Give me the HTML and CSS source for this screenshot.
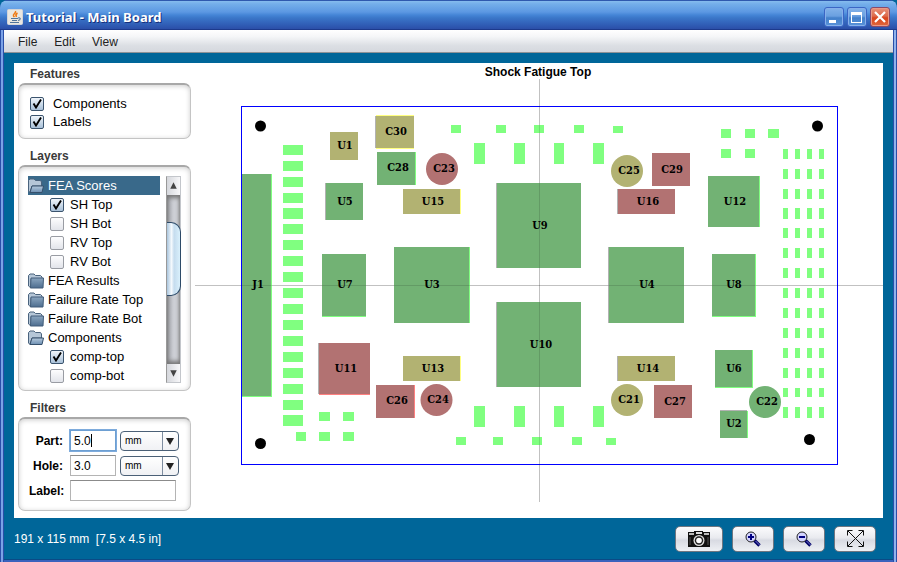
FILE: index.html
```html
<!DOCTYPE html>
<html lang="en">
<head>
<meta charset="utf-8">
<title>Tutorial - Main Board</title>
<link rel="stylesheet" href="styles.css">
</head>
<body>
<div class="window">
  <header class="titlebar">
    <svg class="app-icon" viewBox="0 0 16 16" aria-hidden="true">
      <rect x="0.500" y="0.500" width="15" height="15" rx="1" fill="#e9e7e1" stroke="#d2d4d8"/>
      <path d="M8.500 2c1 2-3 3-2 5l1 1M10.500 4c-2 1-2 2-1 4" fill="none" stroke="#ef7a12" stroke-width="1.500"/>
      <path d="M4 9.500h7M5 11.500h5M3 13.500h9M11 9c3-1 3 2 0 2.500" fill="none" stroke="#50749a" stroke-width="1.100"/>
    </svg>
    <h1 class="title">Tutorial - Main Board</h1>
    <div class="window-buttons">
      <button class="win-btn" aria-label="Minimize"><svg viewBox="0 0 20 20"><path d="M5 13h7v3H5z" fill="#fff"/></svg></button>
      <button class="win-btn" aria-label="Maximize"><svg viewBox="0 0 20 20"><path d="M4 5h11v11H4zM5 8v7h9V8z" fill="#fff" fill-rule="evenodd"/></svg></button>
      <button class="win-btn win-close" aria-label="Close"><svg viewBox="0 0 20 20"><path d="M5 5l10 10M15 5L5 15" stroke="#fff" stroke-width="2.200"/></svg></button>
    </div>
  </header>
  <div class="client">
    <nav class="menubar">
      <button class="menu">File</button>
      <button class="menu">Edit</button>
      <button class="menu">View</button>
    </nav>
    <main class="workspace">
      <aside class="sidebar">
        <section>
          <h2 class="heading">Features</h2>
          <div class="panel features">
            <label class="check"><input type="checkbox" checked>Components</label>
            <label class="check"><input type="checkbox" checked>Labels</label>
          </div>
        </section>
        <section>
          <h2 class="heading">Layers</h2>
          <div class="panel layers">
            <svg width="0" height="0" class="defs" aria-hidden="true">
              <defs>
                <linearGradient id="fold" x1="0" y1="0" x2="0" y2="1"><stop offset="0" stop-color="#8ba6c0"/><stop offset="1" stop-color="#4d6d8f"/></linearGradient>
                <linearGradient id="fold-light" x1="0" y1="0" x2="0" y2="1"><stop offset="0" stop-color="#b6cadd"/><stop offset="1" stop-color="#6d8fb2"/></linearGradient>
                <symbol id="closed" viewBox="0 0 16 16">
                  <path d="M.5 13V2.500L2 1h4l1.500 1.500h5L14 4v2H3v9z" fill="#b5c6d7" stroke="#4a637d"/>
                  <path d="M3 5h12.500l-.5 10H2.500z" fill="url(#fold)" stroke="#425d7a"/>
                </symbol>
                <symbol id="open" viewBox="0 0 16 16">
                  <path d="M.5 13V2.500L2 1h4l1.500 1.500h5L13.500 4v4H4l-2 6.500z" fill="#b5c6d7" stroke="#4a637d"/>
                  <path d="M2 14.500L4 8h11.500l-1.500 6.500z" fill="url(#fold-light)" stroke="#36506c"/>
                </symbol>
              </defs>
            </svg>
            <ul class="tree">
              <li class="node selected"><svg class="folder"><use href="#open"/></svg>FEA Scores</li>
              <li><label class="check leaf"><input type="checkbox" checked>SH Top</label></li>
              <li><label class="check leaf"><input type="checkbox">SH Bot</label></li>
              <li><label class="check leaf"><input type="checkbox">RV Top</label></li>
              <li><label class="check leaf"><input type="checkbox">RV Bot</label></li>
              <li class="node"><svg class="folder"><use href="#closed"/></svg>FEA Results</li>
              <li class="node"><svg class="folder"><use href="#closed"/></svg>Failure Rate Top</li>
              <li class="node"><svg class="folder"><use href="#closed"/></svg>Failure Rate Bot</li>
              <li class="node"><svg class="folder"><use href="#open"/></svg>Components</li>
              <li><label class="check leaf"><input type="checkbox" checked>comp-top</label></li>
              <li><label class="check leaf"><input type="checkbox">comp-bot</label></li>
            </ul>
            <div class="scrollbar">
              <button class="scroll-btn" aria-label="Scroll up"><svg viewBox="0 0 14 18"><path d="M7 5l3.500 7h-7z" fill="#444"/></svg></button>
              <div class="track"><div class="thumb"></div></div>
              <button class="scroll-btn" aria-label="Scroll down"><svg viewBox="0 0 14 18"><path d="M7 13l3.500-7h-7z" fill="#444"/></svg></button>
            </div>
          </div>
        </section>
        <section>
          <h2 class="heading">Filters</h2>
          <form class="panel filters">
            <label for="part">Part:</label>
            <input class="field active" id="part" type="text" value="5.0">
            <select class="unit" aria-label="Part unit"><option>mm</option></select>
            <label for="hole">Hole:</label>
            <input class="field" id="hole" type="text" value="3.0">
            <select class="unit" aria-label="Hole unit"><option>mm</option></select>
            <label for="name">Label:</label>
            <input class="field wide" id="name" type="text" value="">
          </form>
        </section>
      </aside>
      <svg class="board" viewBox="195 63 688 455" role="img" aria-label="Shock Fatigue Top">
        <text class="board-title" x="538" y="76">Shock Fatigue Top</text>
        <path class="axis" d="M539.500 79V502M195 285.500H883"/>
        <rect class="outline" x="241.500" y="106.500" width="596" height="358"/>
        <g class="pads" shape-rendering="crispEdges">
          <path d="M283 145h20v10h-20zM283 161h20v10h-20zM283 177h20v10h-20zM283 193h20v10h-20zM283 208h20v11h-20zM283 224h20v10h-20zM283 240h20v10h-20zM283 256h20v10h-20zM283 272h20v10h-20zM283 288h20v10h-20zM283 304h20v10h-20zM283 320h20v10h-20zM283 336h20v10h-20zM283 352h20v10h-20zM283 368h20v10h-20zM283 384h20v10h-20zM283 400h20v10h-20zM283 415h20v11h-20z"/>
          <path d="M451 125h10v8h-10zM496 125h10v8h-10zM534 125h10v8h-10zM574 125h10v8h-10zM613 126h10v7h-10z"/>
          <path d="M474 143h11v21h-11zM514 143h11v21h-11zM554 143h10v21h-10zM593 143h11v21h-11z"/>
          <path d="M474 406h11v21h-11zM514 406h11v21h-11zM554 406h10v21h-10zM593 406h11v21h-11z"/>
          <path d="M456 437h10v8h-10zM493 437h10v8h-10zM532 437h10v8h-10zM572 437h10v8h-10zM606 438h10v7h-10z"/>
          <path d="M721 129h10v9h-10zM745 129h10v9h-10zM768 129h11v9h-11zM721 149h10v9h-10zM745 149h10v9h-10z"/>
          <path d="M319 412h11v9h-11zM343 412h11v9h-11zM296 432h10v9h-10zM319 432h11v9h-11zM343 432h11v9h-11z"/>
          <path id="pins" d="M783 149h5v10h-5zM783 169h5v10h-5zM783 189h5v10h-5zM783 208h5v11h-5zM783 228h5v10h-5zM783 248h5v10h-5zM783 268h5v10h-5zM783 288h5v10h-5zM783 308h5v10h-5zM783 328h5v10h-5zM783 348h5v10h-5zM783 368h5v10h-5zM783 388h5v9h-5zM783 407h5v11h-5z"/>
          <use href="#pins" x="12"/><use href="#pins" x="24"/><use href="#pins" x="36"/>
          <path d="M242 174h30v223h-30zM377 152h39v33h-39zM322 254h44v63h-44zM394 247h76v76h-76zM708 176h52v51h-52zM712 254h44v63h-44zM715 350h38v38h-38zM720 411h28v27h-28z"/>
        </g>
        <g shape-rendering="crispEdges">
          <path fill="#ffff80" d="M376 115h38v34h-38zM403 189h58v25h-58zM403 356h58v25h-58z"/>
          <path fill="#ff8080" d="M319 343h51v52h-51zM376 385h39v33h-39z"/>
          <path fill="#b2b2b2" d="M375 116h1v32h-1zM325 183h1v37h-1zM318 343h1v51h-1zM496 183h1v85h-1zM496 302h1v85h-1zM608 247h1v76h-1zM617 189h1v25h-1zM617 356h1v25h-1zM720 410h27v1h-27z"/>
          <path class="low" d="M242 174h29v222h-29zM377 152h38v33h-38zM326 183h37v37h-37zM322 254h44v62h-44zM394 247h75v76h-75zM497 183h84v85h-84zM497 302h84v85h-84zM609 247h75v76h-75zM708 176h51v51h-51zM712 254h43v62h-43zM715 350h37v37h-37zM720 411h27v27h-27z"/>
          <path class="mid" d="M330 132h28v28h-28zM376 116h38v32h-38zM403 189h57v25h-57zM403 356h57v25h-57zM618 356h57v25h-57z"/>
          <path class="high" d="M652 153h38v33h-38zM618 189h57v25h-57zM319 343h51v51h-51zM376 385h38v33h-38zM654 385h38v33h-38z"/>
        </g>
        <circle class="high" cx="442" cy="169" r="16"/>
        <circle class="mid" cx="627" cy="171" r="16"/>
        <circle class="high" cx="436.500" cy="400" r="16"/>
        <circle class="mid" cx="627" cy="400" r="16"/>
        <circle class="low" cx="765" cy="402" r="16"/>
        <path class="axis" d="M539.500 79V502M195 285.500H883"/>
        <g fill="#000">
          <circle cx="260.500" cy="126" r="5.500"/><circle cx="817.500" cy="126" r="5.500"/>
          <circle cx="260.500" cy="443.500" r="5.500"/><circle cx="809.500" cy="439.500" r="5.500"/>
        </g>
        <g class="refs">
          <text x="345" y="149">U1</text><text x="396" y="135">C30</text><text x="398" y="171">C28</text><text x="444" y="172">C23</text>
          <text x="345" y="205">U5</text><text x="433" y="205">U15</text><text x="540" y="229">U9</text><text x="629" y="174">C25</text>
          <text x="672" y="173">C29</text><text x="648" y="205">U16</text><text x="735" y="205">U12</text>
          <text x="258" y="288">J1</text><text x="345" y="288">U7</text><text x="432" y="288">U3</text><text x="647" y="288">U4</text><text x="734" y="288">U8</text>
          <text x="541" y="348">U10</text><text x="346" y="372">U11</text><text x="433" y="372">U13</text><text x="648" y="372">U14</text><text x="734" y="372">U6</text>
          <text x="397" y="404">C26</text><text x="438" y="403">C24</text><text x="629" y="403">C21</text><text x="675" y="405">C27</text><text x="767" y="405">C22</text><text x="734" y="427">U2</text>
        </g>
      </svg>
    </main>
    <footer class="statusbar">
      <p class="size">191 x 115 mm&nbsp; [7.5 x 4.5 in]</p>
      <div class="tools">
        <button class="tool snapshot" aria-label="Snapshot"><svg width="24" height="18" viewBox="0 0 24 18">
          <path d="M1 2h6V1h9v1h7v15H1z" fill="#111"/><path d="M2 3h5v2H2zM17 3h5v2h-5z" fill="#bbb"/><path d="M9 2h6v2H9z" fill="#ddd"/><path d="M3 7v8M21 7v8" stroke="#555"/>
          <circle cx="12" cy="10.500" r="5.500" fill="#ddd"/><circle cx="12" cy="10.500" r="4.200" fill="#222"/><circle cx="12" cy="10.500" r="2.800" fill="#fff"/></svg></button>
        <button class="tool" aria-label="Zoom in"><svg width="16" height="16" viewBox="0 0 16 16">
          <path d="M9.500 9.500l5 5" stroke="#000066" stroke-width="3.400"/><path d="M10.500 10l4 4" stroke="#7878d0"/>
          <circle cx="6" cy="6" r="5" fill="#d4d4ff" stroke="#222"/><path d="M6 3v6M3 6h6" stroke="#000080" stroke-width="2"/></svg></button>
        <button class="tool" aria-label="Zoom out"><svg width="16" height="16" viewBox="0 0 16 16">
          <path d="M9.500 9.500l5 5" stroke="#000066" stroke-width="3.400"/><path d="M10.500 10l4 4" stroke="#7878d0"/>
          <circle cx="6" cy="6" r="5" fill="#d4d4ff" stroke="#222"/><path d="M3 6h6" stroke="#000080" stroke-width="2"/></svg></button>
        <button class="tool" aria-label="Fit to window"><svg width="17" height="17" viewBox="0 0 17 17">
          <path d="M1 1l15 15M16 1L1 16M.5 5.500v-5h5M11.500.5h5v5M16.500 11.500v5h-5M5.500 16.500h-5v-5" fill="none" stroke="#111"/></svg></button>
      </div>
    </footer>
  </div>
</div>
</body>
</html>
```
FILE: styles.css
```css
* { box-sizing: border-box; }

body {
  margin: 0;
  background: #006699;
  color: #000;
  font: 13px/16px "Liberation Sans", Arial, sans-serif;
}

h1, h2, p, ul { margin: 0; padding: 0; }
button, input, select { font: inherit; color: inherit; margin: 0; }

.window {
  display: flex;
  flex-direction: column;
  min-height: 100vh;
  padding: 0 4px 3px;
  border-radius: 8px 8px 0 0;
  background: linear-gradient(90deg, #2a4fa8 0 1px, #7ba2e7 1px 3px, #2a4fa8 3px 4px, #3a62bd 4px calc(100% - 4px), #2a4fa8 calc(100% - 4px) calc(100% - 3px), #8fb2ec calc(100% - 3px) calc(100% - 1px), #2a4fa8 calc(100% - 1px));
}

.titlebar {
  display: flex;
  align-items: center;
  height: 30px;
  margin: 0 -4px;
  padding: 3px 7px 0;
  border-radius: 8px 8px 0 0;
  background: linear-gradient(#2f59ae 0 1px, #86bcee 1px, #74aeea 4px, #5c98e2 12px, #4585d6 15px, #3a76c8 18px, #3160b8 24px, #2b4fa8 29px, #1d3a8c 29px);
}

.app-icon { width: 16px; height: 16px; }

.title {
  flex: 1;
  padding-left: 3px;
  color: #fff;
  font: bold 13px/18px "Noto Sans", sans-serif;
  text-shadow: 1px 1px 0 #16307c;
}

.window-buttons { display: flex; gap: 3px; }

.win-btn {
  width: 20px;
  height: 20px;
  padding: 0;
  border: 1px solid #3b66c4;
  border-radius: 3px;
  background: linear-gradient(#83b2e9, #6aa0e0 45%, #4380ca 55%, #5a93da);
  box-shadow: inset 0 0 0 1px #86b0ea;
}
.win-btn svg { display: block; width: 20px; height: 20px; margin: -1px; }
.win-close {
  border-color: #8a4a6a;
  background: linear-gradient(#e8917a, #dd6a4c 45%, #d9441c 55%, #e0683e);
  box-shadow: inset 0 0 0 1px #e89a88;
}

.client { flex: 1; display: flex; flex-direction: column; background: #006699; }

.menubar {
  display: flex;
  gap: 17px;
  height: 23px;
  padding: 0 14px;
  border-bottom: 1px solid #8d9297;
  background: linear-gradient(#fff, #f5f6f8 30%, #dcdfe4 70%, #d5d8de);
}
.menu { padding: 2px 0 0; border: 0; background: none; color: #222; font-size: 12px; }

.workspace {
  display: flex;
  flex: 1;
  margin: 10px 10px 0;
  background: #fff;
}

.sidebar {
  display: flex;
  flex-direction: column;
  gap: 6px;
  width: 181px;
  flex: none;
  padding: 0 4px 6px;
}

.heading {
  height: 20px;
  padding: 2px 12px 0;
  color: #3a3a3a;
  font: bold 12px/18px "Liberation Sans", Arial, sans-serif;
}

.panel {
  width: 173px;
  border: 1px solid #c4c4c4;
  border-top: 2px solid #a8a8a8;
  border-radius: 7px;
  background: #fff;
  box-shadow: inset 0 1px 5px #ccc;
}

.features { display: flex; flex-direction: column; padding: 10px 11px 7px; }
.features .check { height: 18px; gap: 9px; }

.check { display: flex; align-items: center; gap: 6px; height: 19px; }
.check input {
  appearance: none;
  flex: none;
  width: 14px;
  height: 14px;
  border: 1px solid #999ca3;
  border-radius: 2px;
  background: linear-gradient(#fdfdfe, #e2e4ea);
}
.check input:checked {
  border-color: #3b546e;
  background:
    url("data:image/svg+xml,%3Csvg xmlns='http://www.w3.org/2000/svg' viewBox='0 0 12 12'%3E%3Cpath d='M2.500 5.500L5 9.500L10 1.500' fill='none' stroke='%23000' stroke-width='1.900'/%3E%3C/svg%3E"),
    linear-gradient(#f0f5fa, #a8c0d8);
}

.layers { display: flex; gap: 6px; padding: 9px 9px 5px 9px; }
.defs { position: absolute; }
.tree { flex: 1; list-style: none; }
.node { display: flex; align-items: center; gap: 4px; height: 19px; }
.selected { background: #39698a; color: #fff; }
.folder { width: 16px; height: 16px; }
.leaf { padding-left: 22px; }

.scrollbar {
  display: flex;
  flex-direction: column;
  width: 15px;
  height: 207px;
  border: 1px solid #c3c6cb;
  border-left-color: #999;
}
.scroll-btn { height: 18px; padding: 0; border: 0; background: linear-gradient(90deg, #d5d7dc, #f7f7f9); }
.scroll-btn svg { display: block; width: 13px; height: 18px; }
.track {
  flex: 1;
  padding-top: 27px;
  background: linear-gradient(90deg, #aaacb2, #cbcdd3 50%, #d8dae0);
  box-shadow: inset 0 3px 4px #777, inset 0 -3px 4px #777;
}
.thumb {
  height: 74px;
  margin-right: -1px;
  border: 1px solid #2d4a68;
  border-left: 0;
  border-radius: 0 10px 10px 0;
  background: linear-gradient(90deg, #a9c5dd, #f4f9fd 35%, #c5dcee 55%, #d9f0fc);
}

.filters {
  display: grid;
  grid-template-columns: 34px 48px 59px;
  gap: 2px 6px;
  align-items: center;
  padding: 10px 0 8px 10px;
}
.filters label { font-size: 12px; font-weight: bold; text-align: right; }
.filters .unit { margin-left: -3px; }
.field {
  width: 46px;
  height: 21px;
  margin: 1px;
  padding: 0 3px;
  border: 1px solid #b4b4b4;
  border-top-color: #8b8b8b;
  background: #fff;
  font-size: 12px;
  outline: 0;
}
.active {
  border-color: #6d9fd2;
  box-shadow: 0 0 0 1px #7eabdc;
  background: linear-gradient(#000, #000) 20px 3px / 1px 13px no-repeat #fff;
}
.wide { grid-column: 2 / 4; width: 106px; }
.unit {
  appearance: none;
  width: 59px;
  height: 20px;
  padding: 0 4px;
  border: 1px solid #4b6077;
  border-radius: 4px;
  background:
    url("data:image/svg+xml,%3Csvg xmlns='http://www.w3.org/2000/svg' viewBox='0 0 16 18'%3E%3Cpath d='M.5 0v18' stroke='%237e8da0'/%3E%3Cpath d='M4 6h8l-4 7z' fill='%23222'/%3E%3C/svg%3E") right / 16px 18px no-repeat,
    linear-gradient(#fff, #f0f1f4);
  font-size: 10px;
}

.board { flex: 1; min-width: 0; display: block; }
.board-title { font: bold 12px "Liberation Sans", Arial, sans-serif; text-anchor: middle; }
.outline { fill: none; stroke: #00f; }
.pads { fill: #80ff80; }
.low { fill: #72b274; }
.mid { fill: #b2b272; }
.high { fill: #b27272; }
.axis { fill: none; stroke: #000; stroke-opacity: 0.13; }
.refs { font: bold 11px "DejaVu Serif Condensed", "DejaVu Serif", serif; text-anchor: middle; }

.statusbar {
  display: flex;
  align-items: center;
  justify-content: space-between;
  height: 42px;
  padding: 0 17px 0 10px;
  border-bottom: 1px solid #0b4a86;
  color: #fff;
}
.size { font-size: 12px; }
.tools { display: flex; gap: 9px; }
.tool {
  display: flex;
  align-items: center;
  justify-content: center;
  width: 42px;
  height: 26px;
  padding: 0;
  border: 1px solid #6f7680;
  border-radius: 5px;
  background: linear-gradient(#fbfbfd, #e9eaef 45%, #d8dae2 55%, #eef0f4);
}
.snapshot { width: 48px; }
```
